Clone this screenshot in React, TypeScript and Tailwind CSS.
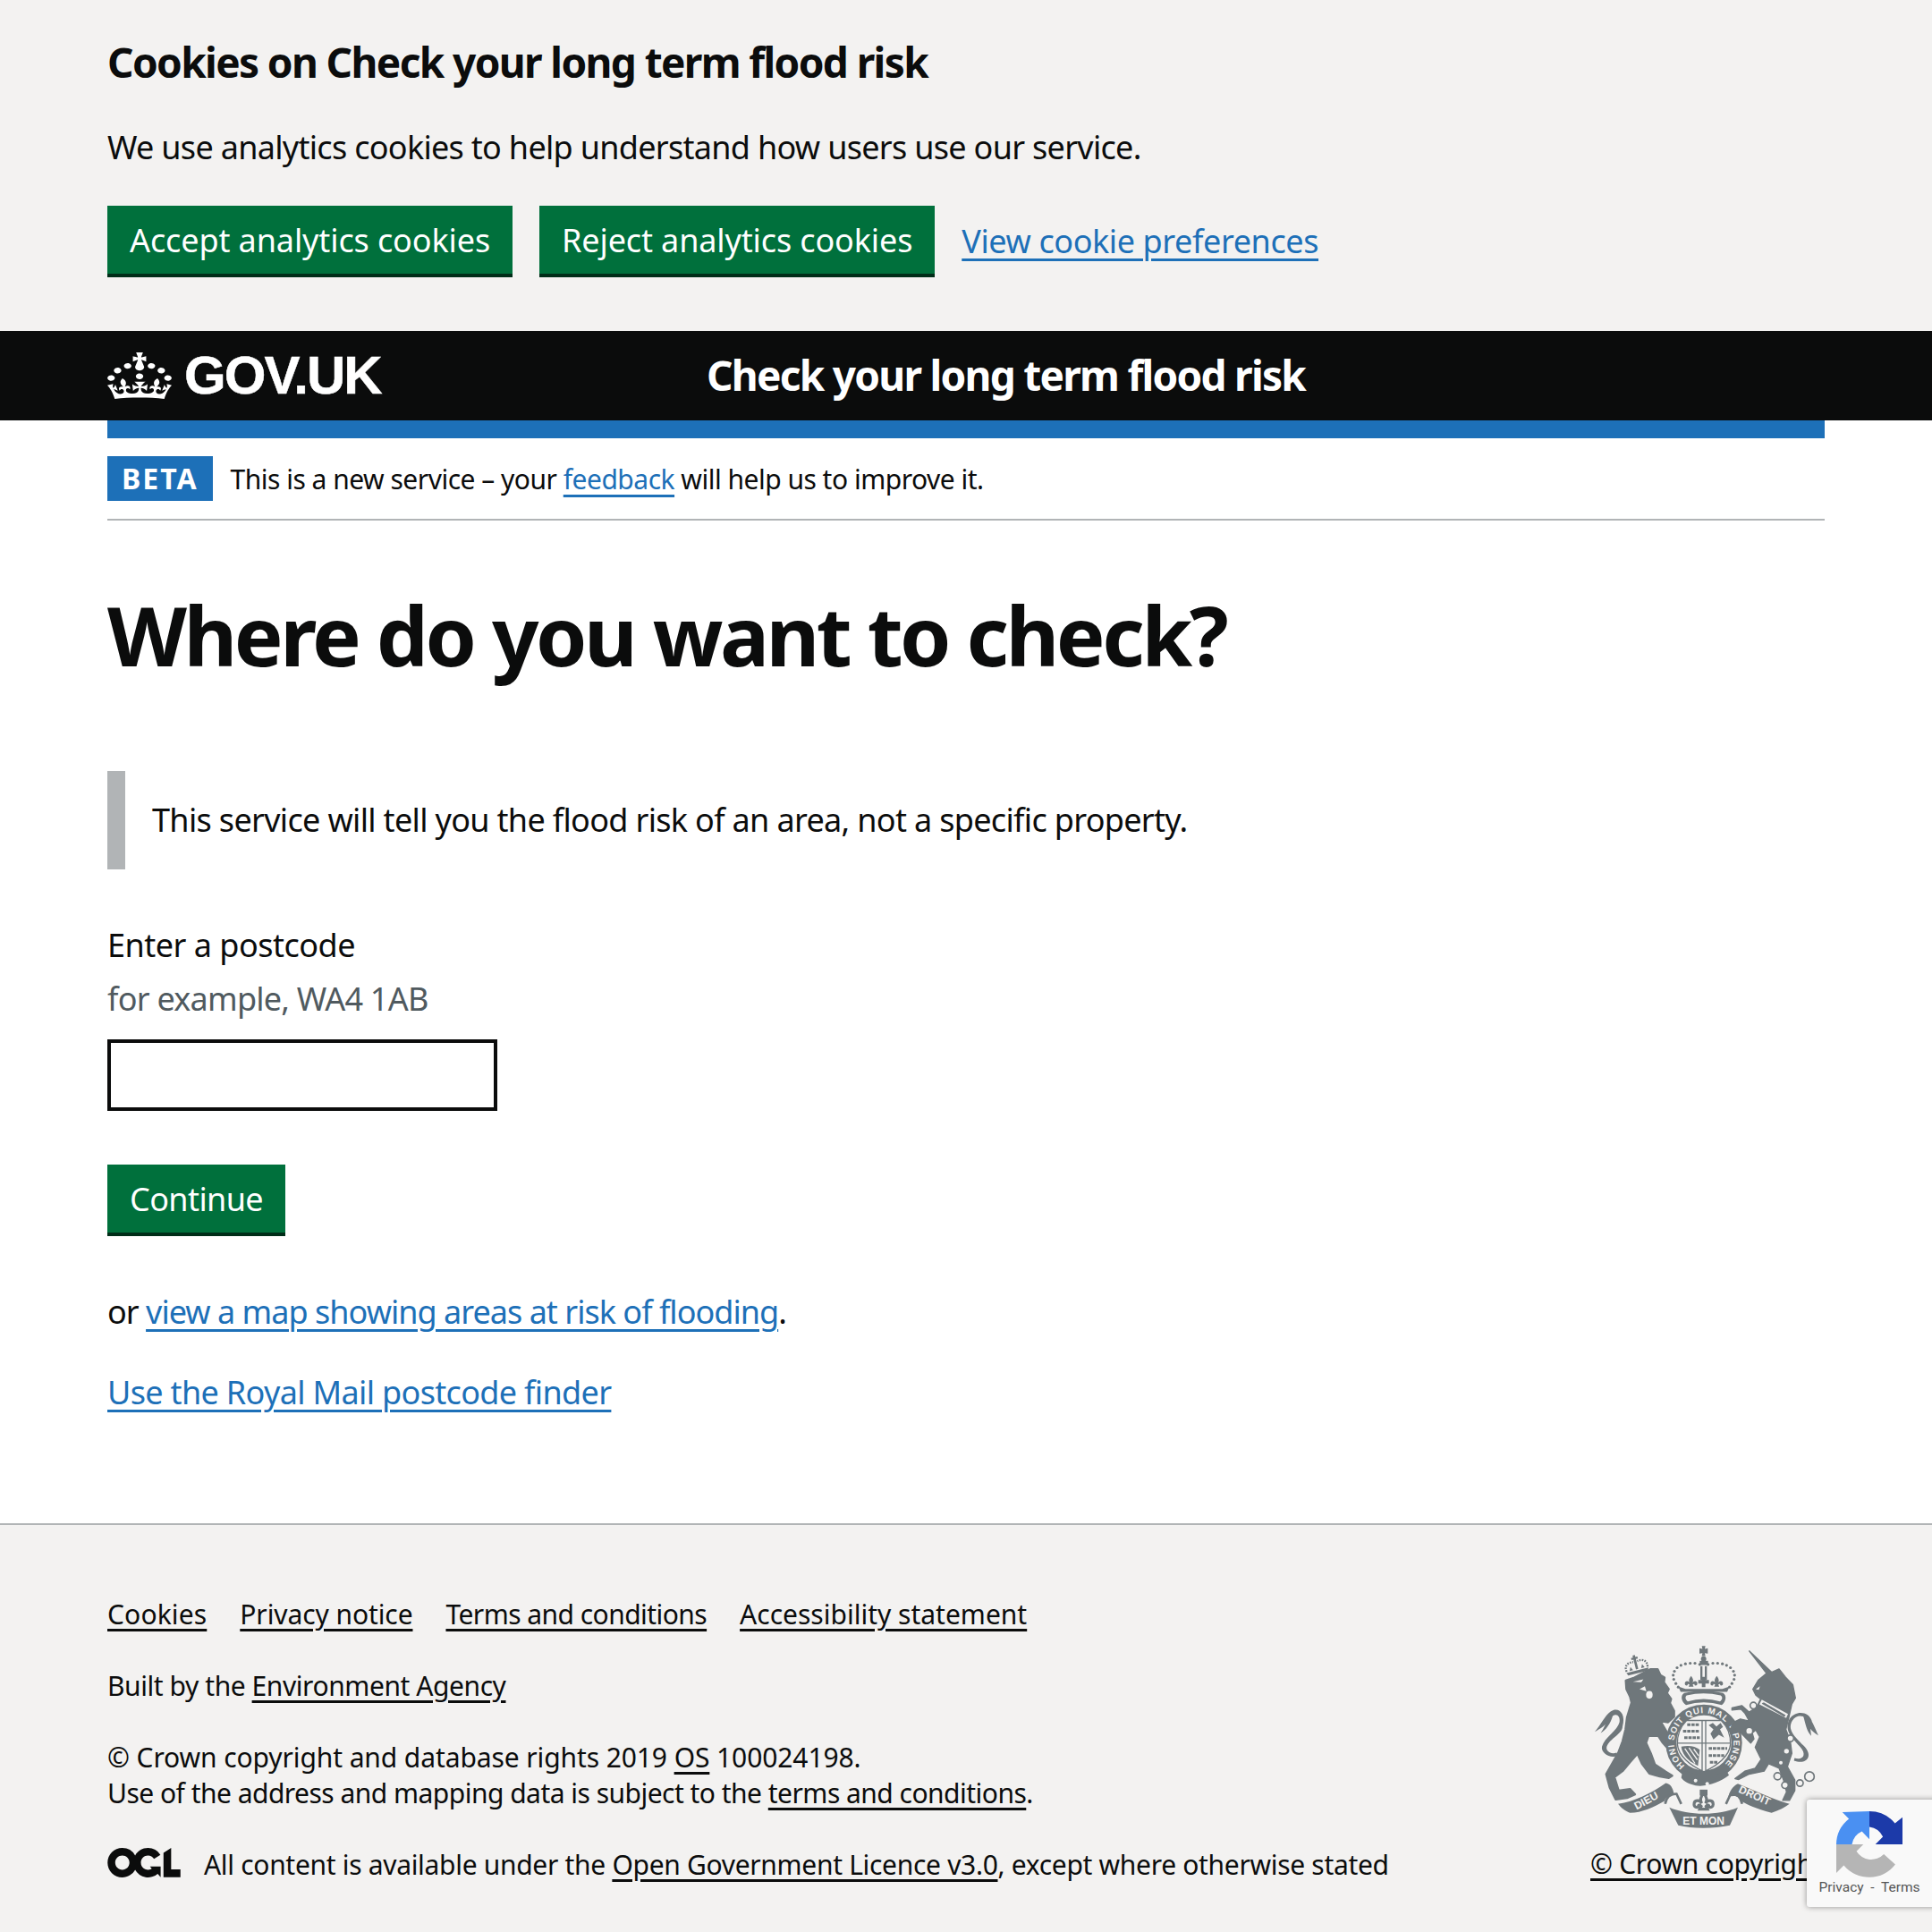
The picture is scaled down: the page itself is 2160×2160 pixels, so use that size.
const font = "font-['Noto_Sans','Liberation_Sans',sans-serif]";

function CrownLogo() {
  return (
    <svg viewBox="0 0 32 30" preserveAspectRatio="none" className="w-[72px] h-[52px] shrink-0" fill="#fff">
      <path d="M22.6 10.4c-1 .4-2-.1-2.4-1-.4-.9.1-2 1-2.4.9-.4 2 .1 2.4 1s-.1 2-1 2.4m-5.9 6.7c-.9.4-2-.1-2.4-1-.4-.9.1-2 1-2.4.9-.4 2 .1 2.4 1s-.1 2-1 2.4m10.8-3.7c-1 .4-2-.1-2.4-1-.4-.9.1-2 1-2.4.9-.4 2 .1 2.4 1s0 2-1 2.4m3.3 4.8c-1 .4-2-.1-2.4-1-.4-.9.1-2 1-2.4.9-.4 2 .1 2.4 1s-.1 2-1 2.4M17 4.7l2.3 1.2V2.5l-2.3.7-.2-.2.9-3h-3.4l.9 3-.2.2c-.1.1-2.3-.7-2.3-.7v3.4L15 4.7c.1.1.1.2.2.2l-1.3 4c-.1.2-.1.4-.1.6 0 1.1.8 2 1.9 2.2h.7c1-.2 1.9-1.1 1.9-2.2 0-.2 0-.4-.1-.6l-1.3-4c-.1-.1 0-.2.1-.2m-7.6 5.7c.9.4 2-.1 2.4-1 .4-.9-.1-2-1-2.4-.9-.4-2 .1-2.4 1s0 2 1 2.4m-5 3c.9.4 2-.1 2.4-1 .4-.9-.1-2-1-2.4-.9-.4-2 .1-2.4 1s.1 2 1 2.4m-3.2 4.8c.9.4 2-.1 2.4-1 .4-1-.1-2-1-2.4-.9-.4-2 .1-2.4 1-.4 1 .1 2 1 2.4m14.8 11c4.4 0 8.6.3 12.3.8 1.1-4.5 2.4-7 3.7-8.8l-2.5-.9c.2 1.3.3 1.9 0 2.7-.4-.4-.8-1.1-1.1-2.3l-1.2 4c.7-.5 1.3-.8 2-.9-1.1 2.5-2.6 3.1-3.5 3-1.1-.2-1.7-1.2-1.5-2.1.3-1.2 1.5-1.5 2.1-.1 1.1-2.3-.8-3-2-2.3 1.9-1.9 2.1-3.5.6-5.6-2.1 1.6-2.1 3.2-1.2 5.5-1.2-1.4-3.2-.6-2.5 1.6.9-1.4 2.1-.5 1.9.8-.2 1.1-1.7 2.1-3.5 1.9-2.7-.2-2.9-2.1-2.9-3.6.7-.1 1.9.5 2.9 1.9l.4-4.3c-1.1 1.1-2.1 1.4-3.2 1.4.4-1.2 2.1-3 2.1-3h-5.4s1.7 1.9 2.1 3c-1.1 0-2.1-.2-3.2-1.4l.4 4.3c1-1.4 2.2-2 2.9-1.9-.1 1.5-.2 3.4-2.9 3.6-1.9.2-3.4-.8-3.5-1.9-.2-1.3 1-2.2 1.9-.8.7-2.3-1.2-3-2.5-1.6.9-2.2.9-3.9-1.2-5.5-1.5 2-1.3 3.7.6 5.6-1.2-.7-3.1 0-2 2.3.6-1.4 1.8-1.1 2.1.1.2.9-.3 1.9-1.5 2.1-.9.2-2.4-.5-3.5-3 .6 0 1.2.3 2 .9l-1.2-4c-.3 1.1-.7 1.9-1.1 2.3-.3-.8-.2-1.4 0-2.7l-2.9.9C1.3 23 2.6 25.5 3.7 30c3.7-.5 7.9-.8 12.3-.8" />
    </svg>
  );
}

function OglLogo() {
  return (
    <svg viewBox="0 0 483.2 195.7" className="w-[82px] h-[33px] shrink-0 mb-[6px]" fill="#0b0c0c">
      <path d="M421.5 142.8V.1l-50.7 32.3v161.1h112.4v-50.7zm-122.3-9.6A47.12 47.12 0 0 1 221 97.8c0-26 21.1-47.1 47.1-47.1 16.7 0 31.4 8.7 39.7 21.8l42.7-27.2A97.63 97.63 0 0 0 268.1 0c-36.5 0-68.3 20.1-85.1 49.7A98 98 0 0 0 97.8 0C43.9 0 0 43.9 0 97.8s43.9 97.8 97.8 97.8c36.5 0 68.3-20.1 85.1-49.7a97.76 97.76 0 0 0 149.6 25.4l19.4 22.2v-70.1h-70.8l19.9 22.7zM97.8 145c-26 0-47.1-21.1-47.1-47.1s21.1-47.1 47.1-47.1 47.2 21 47.2 47S123.8 145 97.8 145" />
    </svg>
  );
}

const crestGrey = "#6f777b";
const crestBg = "#f3f2f1";

function Fleur({ x, y, s = 1 }: { x: number; y: number; s?: number }) {
  return (
    <path
      transform={`translate(${x} ${y}) scale(${s})`}
      d="M0 -22 C8 -12 8 -6 4 0 C8 -8 20 -8 20 2 C20 8 14 10 11 7 C12 3 8 2 5 6 L8 12 H-8 L-5 6 C-8 2 -12 3 -11 7 C-14 10 -20 8 -20 2 C-20 -8 -8 -8 -4 0 C-8 -6 -8 -12 0 -22Z"
    />
  );
}

// traced by eye off the footer, coordinates are 3x reference pixels
function Crest({ className }: { className: string }) {
  const ringDots = [
    [424, 122], [408, 118], [392, 118], [376, 120], [361, 125], [348, 133], [339, 145], [335, 158], [337, 172], [344, 186], [352, 198],
    [452, 122], [468, 118], [484, 118], [500, 120], [514, 125], [527, 133], [537, 145], [541, 158], [539, 172], [532, 186], [524, 198],
  ];
  const shield = "M380 310 H496 C516 330 528 360 527 390 C524 430 482 462 438 482 C394 462 352 430 349 390 C348 360 360 330 380 310Z";
  return (
    <svg viewBox="60 60 780 620" className={className} fill={crestGrey}>
      {/* lion */}
      <path
        stroke={crestGrey}
        strokeWidth="7"
        strokeLinejoin="round"
        d="M176 176 L205 166 L258 138 L283 138 L292 158 L306 166 L304 182 L320 205 L314 218 L328 238 L324 252 L338 278 L338 298 L318 316 L292 312 L335 385 L343 402 L335 418 L318 405 L300 385 L285 362 L252 362 L244 385 L260 420 L274 458 L310 482 L332 495 L320 503 L290 498 L255 488 L230 455 L215 422 L190 450 L165 480 L138 500 L152 545 L190 540 L207 558 L180 570 L142 575 L122 535 L110 490 L130 455 L150 420 L165 380 L175 340 L180 300 L195 250 L190 230 L178 205Z"
      />
      <ellipse cx="255" cy="224" rx="11" ry="13" fill={crestBg} />
      <path d="M200 180 L235 172 L228 182 Z M240 195 L222 205 L245 212 Z" fill={crestBg} />
      <path d="M165 330 C178 285 150 262 125 280 C105 295 95 320 72 348 C90 338 100 332 108 322 C102 335 100 340 92 352 C110 342 125 320 132 295 C145 285 158 295 155 315 C148 345 105 365 96 398 C92 420 125 440 150 428 L145 418 C125 425 108 412 112 398 C122 370 165 355 165 330Z" />
      {/* lion's crown */}
      <g transform="rotate(-14 212 130)">
        <path d="M178 152 L246 152 L250 142 L174 142Z" />
        <path d="M176 138 C172 118 186 108 205 112 M248 138 C252 118 238 108 219 112" fill="none" strokeWidth="7" stroke={crestGrey} strokeDasharray="5 4" />
        <path d="M208 90 h8 v7 h7 v7 h-7 v34 h-8 v-34 h-7 v-7 h7z" />
        <path d="M186 138 l6 -12 6 12z M226 138 l6 -12 6 12z" />
      </g>
      {/* royal crown */}
      <path d="M431 60 h12 l-2 10 10 -2 v18 l-10 -2 2 10 h-12 l2 -10 -10 2 v-18 l10 2z" />
      <circle cx="437" cy="104" r="9" />
      <rect x="424" y="110" width="28" height="14" />
      <path d="M426 128 h7 v46 h-7z M441 128 h7 v46 h-7z" />
      <g>
        {ringDots.map(([x, y]) => (
          <circle key={`${x}-${y}`} cx={x} cy={y} r="4.8" />
        ))}
      </g>
      <Fleur x={395} y={184} s={1.05} />
      <Fleur x={481} y={184} s={1.05} />
      <path d="M431 164 h12 v10 h12 v12 h-12 v12 h-12 v-12 h-12 v-12 h12z" />
      <path d="M352 196 L376 204 L500 204 L524 196 L516 214 L360 214Z" />
      <path fillRule="evenodd" d="M372 218 Q437 202 502 218 C516 226 512 248 498 258 Q437 240 378 258 C362 248 358 226 372 218Z M380 226 Q437 212 494 226 C502 232 500 240 492 246 Q437 230 384 246 C376 240 374 232 380 226Z" />
      {/* garter */}
      <circle cx="438" cy="385" r="110" fill="none" stroke={crestGrey} strokeWidth="36" />
      <path id="garterPath" d="M374 462 A100 100 0 1 1 502 462" fill="none" />
      <text fontFamily="Liberation Sans, sans-serif" fontWeight="700" fontSize="29" fill={crestBg}>
        <textPath href="#garterPath" textLength="480" lengthAdjust="spacing">HONI SOIT QUI MAL Y PENSE</textPath>
      </text>
      {/* shield */}
      <path d={shield} fill={crestBg} />
      <path d={`${shield} M432 310 V482 M444 310 V482 M349 386 H527`} fill="none" stroke={crestGrey} strokeWidth="4" />
      <g fill="none" stroke={crestGrey} strokeWidth="9" strokeDasharray="11 3">
        <path d="M382 324 H424 M368 346 H424 M372 368 H424" />
        <path d="M454 404 H516 M454 428 H506 M458 450 H484" />
      </g>
      <path d="M454 326 L468 318 L480 330 L494 318 L502 332 L492 340 L506 368 L488 358 L470 374 L460 354 L470 340Z" />
      <path d="M362 398 C385 392 410 396 424 408 L418 462 L400 452 C380 440 364 420 362 398Z" />
      <path d="M374 404 L408 454 M388 402 L416 442 M404 406 L420 428" stroke={crestBg} strokeWidth="4" fill="none" />
      {/* garter buckle */}
      <path d="M366 482 C380 478 392 486 420 492 C455 498 490 490 515 480 L522 494 C495 515 445 535 410 528 C390 524 370 515 362 502Z" />
      <circle cx="410" cy="512" r="6" fill={crestBg} />
      <circle cx="449" cy="522" r="6" fill={crestBg} />
      {/* unicorn */}
      <path
        stroke={crestGrey}
        strokeWidth="4"
        strokeLinejoin="round"
        d="M590 77 L665 148 L690 137 L712 165 L736 190 L745 235 L733 255 L723 300 L713 340 L728 380 L733 420 L718 465 L743 510 L743 545 L725 578 L702 578 L715 550 L705 510 L690 470 L655 455 L640 480 L590 490 L555 508 L542 505 L575 480 L610 470 L630 440 L610 400 L625 365 L612 342 L600 352 L606 372 L595 386 L560 350 L530 332 L534 318 L560 305 L590 312 L575 285 L562 272 L532 275 L532 268 L565 260 L590 282 L615 265 L628 238 L612 225 L602 205 L620 175 L648 152Z"
      />
      <path d="M632 240 L720 288 L714 302 L624 256Z" fill={crestBg} />
      <path d="M636 250 H640 L712 292 L708 298 L632 254Z" />
      <path d="M612 205 l14 -10 -4 12z" fill={crestBg} />
      <path d="M740 445 C782 460 808 430 772 394 C742 364 716 340 735 310 C750 286 782 292 792 318 L800 312 C790 278 745 275 725 305 C705 345 735 370 760 398 C785 425 770 445 742 436Z" />
      <path d="M770 290 C795 290 805 325 822 360 C808 352 800 345 795 338 L798 362 C782 345 780 325 770 290Z" />
      <circle cx="715" cy="413" r="8" fill={crestBg} />
      <circle cx="696" cy="452" r="6" fill={crestBg} />
      <circle cx="728" cy="370" r="11" fill={crestBg} stroke={crestGrey} strokeWidth="5" />
      <g fill={crestBg} stroke={crestGrey} strokeWidth="5">
        <circle cx="604" cy="260" r="11" />
        <circle cx="590" cy="345" r="12" />
        <circle cx="685" cy="497" r="12" />
        <circle cx="710" cy="527" r="11" />
        <circle cx="760" cy="520" r="11" />
        <circle cx="792" cy="498" r="16" />
      </g>
      {/* motto */}
      <path d="M150 590 C205 582 260 555 310 520 C325 522 335 535 338 560 C320 560 312 566 306 580 C270 600 230 620 190 620 C175 615 160 603 150 590Z" />
      <path d="M552 522 C610 545 670 575 725 590 C710 602 690 612 665 620 C610 605 585 592 566 582 C560 565 545 560 520 566 C525 545 535 530 552 522Z" />
      <path d="M322 602 C390 630 485 630 552 602 L525 662 C470 674 400 674 352 662Z" />
      <path d="M308 590 C312 566 328 556 346 556 L362 590 M566 590 C562 566 546 556 528 556 L512 590" fill="none" stroke={crestGrey} strokeWidth="8" />
      <g fontFamily="Liberation Sans, sans-serif" fontWeight="700" fontSize="36" fill={crestBg}>
        <text transform="translate(212 610) rotate(-28)">DIEU</text>
        <text x="437" y="660" textAnchor="middle">ET MON</text>
        <text transform="translate(552 550) rotate(24)">DROIT</text>
      </g>
      {/* fleur under the shield */}
      <rect x="424" y="542" width="26" height="20" />
      <g fill={crestBg} stroke={crestGrey} strokeWidth="6">
        <Fleur x={437} y={588} s={1.6} />
      </g>
    </svg>
  );
}

function RecaptchaMark() {
  return (
    <svg viewBox="130 75 220 220" className="w-[74px] h-[74px]">
      <path d="M130 185 A110 110 0 0 1 172 100 L150 78 L240 75 L240 168 L215 142 A58 58 0 0 0 182 185Z" fill="#4a90f2" />
      <path d="M240 75 A110 110 0 0 1 325 115 L350 95 L350 185 L260 185 L285 160 A58 58 0 0 0 240 127Z" fill="#1c3aa9" />
      <path d="M130 185 H220 L197 208 A58 58 0 0 0 288 218 L326 252 A110 110 0 0 1 155 255 L130 280Z" fill="#b5b5b5" />
    </svg>
  );
}

const green = "inline-flex items-center h-[80px] px-[25px] pt-[2px] bg-[#00703c] border-b-[4px] border-[#002d18] text-white text-[36px] leading-none";
const blueLink = "text-[#1d70b8] underline underline-offset-[6px] decoration-[3px]";
const blackLink = "underline underline-offset-[5px] decoration-[3px]";

export default function App() {
  return (
    <div className={`${font} relative h-[2160px] overflow-hidden bg-white text-[#0b0c0c] flex flex-col`}>
      <div className="bg-[#f3f2f1] h-[370px] px-[120px] pt-[39px] shrink-0">
        <h2 className="text-[46px] leading-[60px] font-bold tracking-[-1.62px]">Cookies on Check your long term flood risk</h2>
        <p className="mt-[41px] text-[36px] leading-[50px] tracking-[-0.7px]">We use analytics cookies to help understand how users use our service.</p>
        <div className="mt-[40px] flex items-center gap-[30px]">
          <button className={`${green} tracking-[-0.11px]`}>Accept analytics cookies</button>
          <button className={`${green} tracking-[-0.13px]`}>Reject analytics cookies</button>
          <a className={`${blueLink} text-[36px] tracking-[-0.4px]`}>View cookie preferences</a>
        </div>
      </div>

      <div className="bg-[#0b0c0c] h-[100px] px-[120px] flex items-center shrink-0">
        <div className="flex items-center gap-[14px] w-[670px]">
          <CrownLogo />
          <span className="font-['Liberation_Sans',sans-serif] font-bold text-[60px] text-white tracking-[-1.9px] [-webkit-text-stroke:0.5px_white]">GOV.UK</span>
        </div>
        <span className="pb-[2px] text-white font-bold text-[46px] tracking-[-1.73px]">Check your long term flood risk</span>
      </div>

      <div className="mx-[120px] flex-1 flex flex-col">
        <div className="h-[20px] bg-[#1d70b8]" />
        <div className="mt-[20px] pb-[20px] border-b-2 border-[#b1b4b6] flex items-center">
          <span className="bg-[#1d70b8] text-white font-bold text-[32px] h-[50px] leading-[50px] px-[16px] tracking-[2px]">BETA</span>
          <span className="ml-[20px] text-[30px] tracking-[-0.5px]">
            This is a new service – your <a className={blueLink}>feedback</a> will help us to improve it.
          </span>
        </div>

        <h1 className="mt-[68px] text-[92px] leading-[120px] font-bold tracking-[-3.5px]">Where do you want to check?</h1>

        <div className="mt-[92px] h-[110px] border-l-[20px] border-[#b1b4b6] pl-[30px] flex items-center text-[36px] tracking-[-0.67px]">
          This service will tell you the flood risk of an area, not a specific property.
        </div>

        <label className="mt-[60px] text-[36px] leading-[50px] tracking-[-0.5px]">Enter a postcode</label>
        <div className="mt-[10px] text-[36px] leading-[50px] text-[#505a5f] tracking-[-0.75px]">for example, WA4 1AB</div>
        <input className="mt-[20px] w-[436px] h-[80px] border-[4px] border-[#0b0c0c] bg-white" />

        <div className="mt-[60px]">
          <button className={`${green} tracking-[-0.6px]`}>Continue</button>
        </div>

        <p className="mt-[60px] text-[36px] leading-[50px] tracking-[-0.98px]">
          or <a className={blueLink}>view a map showing areas at risk of flooding</a>.
        </p>
        <p className="mt-[40px] text-[36px] leading-[50px] tracking-[-0.66px]">
          <a className={blueLink}>Use the Royal Mail postcode finder</a>
        </p>
      </div>

      <footer className="bg-[#f3f2f1] border-t-2 border-[#b1b4b6] h-[457px] shrink-0 px-[120px] pt-[80px] flex justify-between text-[30px] leading-[40px]">
        <div className="flex flex-col">
          <div className="flex gap-[37px]">
            <a className={`${blackLink} tracking-[0.14px]`}>Cookies</a>
            <a className={`${blackLink} tracking-[-0.09px]`}>Privacy notice</a>
            <a className={`${blackLink} tracking-[-0.55px]`}>Terms and conditions</a>
            <a className={`${blackLink} tracking-[0px]`}>Accessibility statement</a>
          </div>
          <p className="mt-[40px] tracking-[-0.43px]">Built by the <a className={blackLink}>Environment Agency</a></p>
          <p className="mt-[40px] tracking-[-0.1px]">© Crown copyright and database rights 2019 <a className={blackLink}>OS</a> 100024198.</p>
          <p className="tracking-[-0.52px]">Use of the address and mapping data is subject to the <a className={blackLink}>terms and conditions</a>.</p>
          <div className="mt-[40px] flex items-center gap-[26px]">
            <OglLogo />
            <span className="tracking-[-0.31px]">All content is available under the <a className={blackLink}>Open Government Licence v3.0</a>, except where otherwise stated</span>
          </div>
        </div>
        <div className="flex flex-col items-start mt-[55px] w-[261px]">
          <Crest className="w-[260px] h-[207px] shrink-0" />
          <a className={`${blackLink} mt-[17px] -ml-[1px] whitespace-nowrap tracking-[-0.3px]`}>© Crown copyright</a>
        </div>
      </footer>

      <div className="absolute left-[2020px] top-[2012px] w-[256px] h-[120px] rounded-[3px] bg-[#f9f9f9] shadow-[0_0_6px_rgba(0,0,0,0.4)] flex flex-col font-['Roboto',sans-serif]">
        <div className="w-[140px] flex flex-col items-center pt-[13px]">
          <RecaptchaMark />
          <div className="mt-[1px] text-[15.5px] leading-[20px] text-[#555] whitespace-pre">Privacy  -  Terms</div>
        </div>
      </div>
    </div>
  );
}
